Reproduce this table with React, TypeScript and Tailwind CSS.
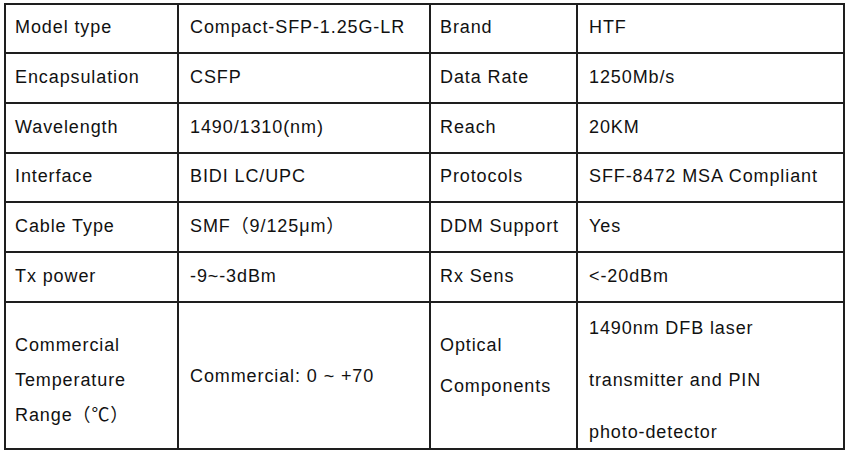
import React from "react";

const font = { fontFamily: '"Liberation Sans", Arial, "Noto Sans CJK SC", sans-serif' };

function Cell({ children, pl, extra = "" }: { children: React.ReactNode; pl: string; extra?: string }) {
  return (
    <div className={`bg-white flex items-center ${pl} pb-[2px] ${extra}`}>
      <span className="whitespace-nowrap">{children}</span>
    </div>
  );
}

const rows: [string, string, string, string][] = [
  ["Model type", "Compact-SFP-1.25G-LR", "Brand", "HTF"],
  ["Encapsulation", "CSFP", "Data Rate", "1250Mb/s"],
  ["Wavelength", "1490/1310(nm)", "Reach", "20KM"],
  ["Interface", "BIDI LC/UPC", "Protocols", "SFF-8472 MSA Compliant"],
  ["Cable Type", "SMF（9/125μm）", "DDM Support", "Yes"],
  ["Tx power", "-9~-3dBm", "Rx Sens", "<-20dBm"],
];

export default function App() {
  return (
    <div className="w-[850px] h-[458px] bg-white overflow-hidden" style={font}>
      <div className="ml-[4px] mt-[3px] inline-grid grid-cols-[171px_250px_145px_265px] grid-rows-[47px_48px_48px_47px_48px_48px_145px] gap-[2px] p-[2px] bg-[#1e1e1e] text-[18px] tracking-[0.9px] text-[#111111]">
        {rows.map((r, i) => (
          <React.Fragment key={i}>
            <Cell pl="pl-[9px]">{r[0]}</Cell>
            <Cell pl="pl-[11px]">{r[1]}</Cell>
            <Cell pl="pl-[9px]">{r[2]}</Cell>
            <Cell pl="pl-[11px]">{r[3]}</Cell>
          </React.Fragment>
        ))}
        <div className="bg-white flex items-center pl-[9px] pt-[10px] leading-[35px]">
          <div>
            <div>Commercial</div>
            <div>Temperature</div>
            <div>Range（℃）</div>
          </div>
        </div>
        <div className="bg-white flex items-center pl-[11px] pt-[2px]">
          <span>Commercial: 0 ~ +70</span>
        </div>
        <div className="bg-white flex items-center pl-[9px] pb-[19px] leading-[41px]">
          <div>
            <div>Optical</div>
            <div>Components</div>
          </div>
        </div>
        <div className="bg-white flex items-center pl-[11px] pt-[8px] leading-[52px]">
          <div>
            <div>1490nm DFB laser</div>
            <div>transmitter and PIN</div>
            <div>photo-detector</div>
          </div>
        </div>
      </div>
    </div>
  );
}
